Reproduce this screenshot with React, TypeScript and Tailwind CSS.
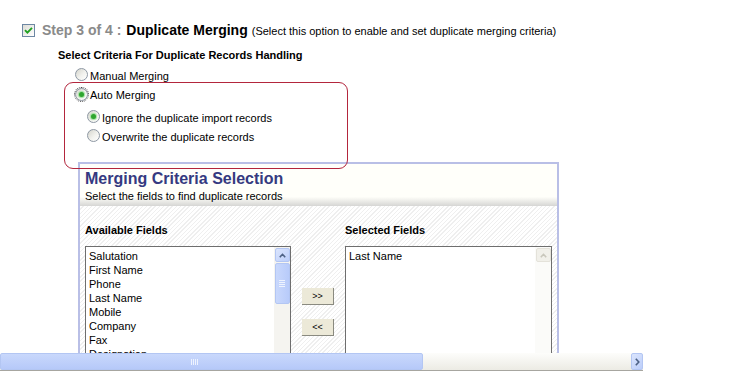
import React from 'react'

const AVAILABLE = ['Salutation', 'First Name', 'Phone', 'Last Name', 'Mobile', 'Company', 'Fax', 'Designation', 'Email']

function CheckBox() {
  return (
    <span className="flex h-[13px] w-[13px] shrink-0 items-center justify-center border border-[#6d87a3] bg-[linear-gradient(135deg,#dcdcd6,#ffffff)]">
      <svg width="9" height="9" viewBox="0 0 9 9">
        <path d="M1 4.2 L3.4 6.6 L8 1.8" fill="none" stroke="#21a121" strokeWidth="1.9" />
      </svg>
    </span>
  )
}

function Radio({ checked, focus }: { checked?: boolean; focus?: boolean }) {
  return (
    <span
      className={`flex h-[13px] w-[13px] shrink-0 items-center justify-center rounded-full border border-[#8e98a4] bg-[linear-gradient(135deg,#d4d4cc,#f2f2ee_55%,#ffffff)] ${
        focus ? 'outline-1 outline-dotted outline-[#444] outline-offset-0' : ''
      }`}
    >
      {checked && <span className="h-[5px] w-[5px] rounded-full bg-[#2fa52f] shadow-[0_0_1px_1px_#9be09b]" />}
    </span>
  )
}

function UpArrow({ disabled }: { disabled?: boolean }) {
  return (
    <span
      className={`flex h-[14px] w-[15px] items-center justify-center rounded-[2px] border ${
        disabled ? 'border-[#e4e2da] bg-[#f1f0ea]' : 'border-[#b3c6f3] bg-[linear-gradient(135deg,#dbe5fd,#bccefa)]'
      }`}
    >
      <svg width="7" height="5" viewBox="0 0 7 5">
        <path d="M0.8 4.2 L3.5 1.3 L6.2 4.2" fill="none" stroke={disabled ? '#c9c7bc' : '#4d6185'} strokeWidth="1.6" />
      </svg>
    </span>
  )
}

function Grip({ vertical }: { vertical?: boolean }) {
  const lines = [0, 1, 2, 3]
  return (
    <span className={`flex ${vertical ? 'flex-col gap-[1px]' : 'flex-row gap-[1px]'}`}>
      {lines.map(i => (
        <span key={i} className={vertical ? 'h-[1px] w-[6px] bg-[#eef3fe]' : 'h-[6px] w-[1px] bg-[#eef3fe]'} />
      ))}
    </span>
  )
}

function ListBox({ items, width, active }: { items: string[]; width: string; active?: boolean }) {
  return (
    <div className={`flex h-[140px] ${width} border border-[#6e6e6e] bg-white`}>
      <div className="flex-1 pl-[3px] pt-[2px] text-[11px] leading-[14px] text-black">
        {items.map(it => (
          <div key={it}>{it}</div>
        ))}
      </div>
      <div className={`flex w-[16px] flex-col items-center pt-[1px] ${active ? 'bg-[#f5f4f0]' : 'bg-[#fbfbf9]'}`}>
        <UpArrow disabled={!active} />
        {active && (
          <span className="mt-[1px] flex h-[41px] w-[15px] items-center justify-center rounded-[2px] border border-[#b3c6f3] bg-[linear-gradient(90deg,#c9d8fc,#b8cbfa)]">
            <Grip vertical />
          </span>
        )}
      </div>
    </div>
  )
}

function MoveButton({ label }: { label: string }) {
  return (
    <button className="flex h-[17px] w-[32px] items-center justify-center border-b border-r border-[#8a8a80] bg-[#ece9d8] text-[9px] leading-none text-black">
      {label}
    </button>
  )
}

export default function App() {
  return (
    <div className="flex h-[373px] w-[737px] flex-col overflow-hidden bg-white font-['Liberation_Sans',Arial,sans-serif] text-black">
      <div className="relative min-h-0 flex-1 overflow-hidden">
        <div className="ml-[22px] mt-[23px] flex h-[14px] items-center">
          <CheckBox />
          <span className="ml-[7px] text-[14px] font-bold leading-[14px] text-[#8a8a8a]">Step 3 of 4 :</span>
          <span className="ml-[5px] text-[14px] font-bold leading-[14px]">Duplicate Merging</span>
          <span className="ml-[4px] pt-[2px] text-[11px] leading-[14px]">(Select this option to enable and set duplicate merging criteria)</span>
        </div>

        <div className="ml-[58px] mt-[11px] h-[14px] text-[11px] font-bold leading-[14px]">
          Select Criteria For Duplicate Records Handling
        </div>

        <div className="ml-[75px] mt-[6px] flex h-[13px] items-center gap-[2px]">
          <Radio />
          <span className="pt-[3px] text-[11px] leading-[13px]">Manual Merging</span>
        </div>
        <div className="ml-[75px] mt-[7px] flex h-[13px] items-center gap-[2px]">
          <Radio checked focus />
          <span className="pt-[2px] text-[11px] leading-[13px]">Auto Merging</span>
        </div>
        <div className="ml-[87px] mt-[9px] flex h-[13px] items-center gap-[2px]">
          <Radio checked />
          <span className="pt-[3px] text-[11px] leading-[13px]">Ignore the duplicate import records</span>
        </div>
        <div className="ml-[87px] mt-[6px] flex h-[13px] items-center gap-[2px]">
          <Radio />
          <span className="pt-[3px] text-[11px] leading-[13px]">Overwrite the duplicate records</span>
        </div>

        <div className="ml-[78px] mt-[20px] w-[481px] border-x-2 border-t-2 border-[#b9bfe6]">
          <div className="h-[42px] bg-[linear-gradient(to_bottom,#fffffa_0,#fffffa_78%,#d6d6d4_100%)] pl-[5px] pt-[5px]">
            <div className="h-[20px] text-[16px] font-bold leading-[20px] text-[#353a80]">Merging Criteria Selection</div>
            <div className="h-[14px] text-[11px] leading-[14px]">Select the fields to find duplicate records</div>
          </div>
          <div className="h-[200px] bg-[repeating-linear-gradient(135deg,#ffffff_0,#ffffff_2px,#efefef_2px,#efefef_3px)] pl-[5px] pt-[17px]">
            <div className="flex">
              <div className="w-[206px]">
                <div className="h-[14px] text-[11px] font-bold leading-[14px]">Available Fields</div>
                <div className="mt-[9px]">
                  <ListBox items={AVAILABLE} width="w-[206px]" active />
                </div>
              </div>
              <div className="flex w-[54px] flex-col items-center pt-[65px]">
                <MoveButton label=">>" />
                <div className="mt-[14px]">
                  <MoveButton label="<<" />
                </div>
              </div>
              <div className="w-[207px]">
                <div className="h-[14px] text-[11px] font-bold leading-[14px]">Selected Fields</div>
                <div className="mt-[9px]">
                  <ListBox items={['Last Name']} width="w-[207px]" />
                </div>
              </div>
            </div>
          </div>
        </div>

        {/* annotation box */}
        <div className="absolute left-[64px] top-[82px] h-[87px] w-[284px] rounded-[9px] border border-[#b3263d]" />
      </div>

      <div className="flex h-[17px] shrink-0">
        <div className="flex w-[643px] bg-[linear-gradient(to_bottom,#fdfdfb,#ecebe4)]">
          <div className="flex h-[17px] w-[423px] items-center rounded-[2px] border border-[#b3c6f3] bg-[linear-gradient(to_bottom,#c9d8fc,#b6c9f9)] pl-[190px]">
            <Grip />
          </div>
          <div className="flex-1" />
          <div className="flex h-[17px] w-[12px] items-center justify-center rounded-[2px] border border-[#b3c6f3] bg-[linear-gradient(135deg,#dbe5fd,#bccefa)]">
            <svg width="5" height="8" viewBox="0 0 5 8">
              <path d="M0.8 0.8 L3.8 4 L0.8 7.2" fill="none" stroke="#4d6185" strokeWidth="1.6" />
            </svg>
          </div>
        </div>
      </div>
      <div className="h-[3px] shrink-0">
        <div className="h-[1px] w-[643px] bg-[#a7a6a0]" />
      </div>
    </div>
  )
}
